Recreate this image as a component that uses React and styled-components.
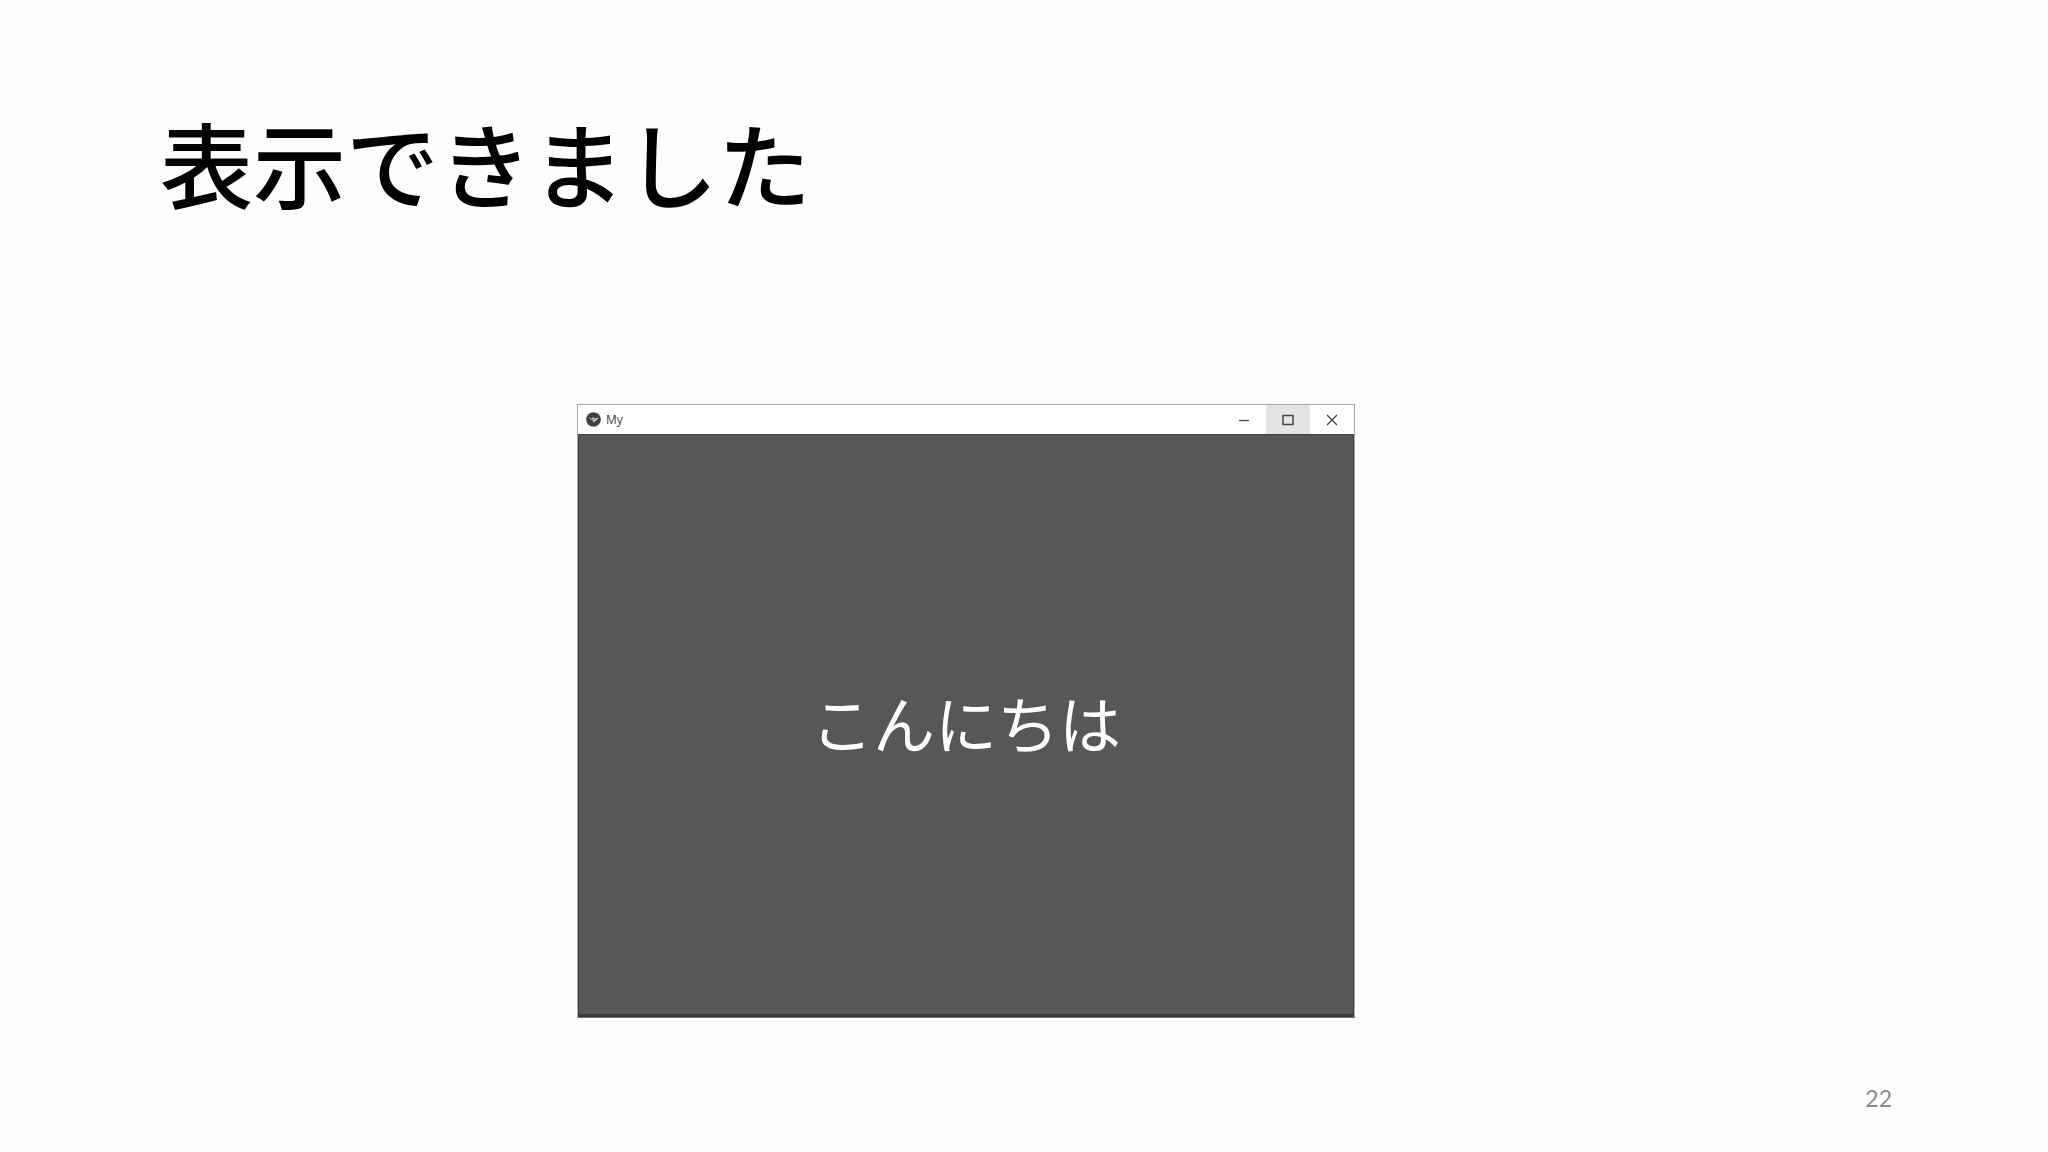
import React from "react";
import styled, { createGlobalStyle } from "styled-components";

const GlobalStyle = createGlobalStyle`
  * { box-sizing: border-box; }
  body {
    margin: 0;
    background: #fefefe;
    font-family: "Noto Sans CJK JP", sans-serif;
  }
`;

const Slide = styled.main`
  display: flex;
  flex-direction: column;
  min-height: 100vh;
  padding: 92px 156px 38px 160px;
`;

const Title = styled.h1`
  margin: 0 0 172px;
  color: #000;
  font-size: 93px;
  font-weight: 500;
  line-height: 140px;
`;

const Stage = styled.div`
  display: grid;
  grid-template-columns: 417fr minmax(0, 778px) 537fr;
`;

const AppWindow = styled.section`
  grid-column: 2;
  border: 1px solid #a8a8a8;
  border-bottom-color: #707070;
`;

const TitleBar = styled.header`
  display: flex;
  align-items: stretch;
  height: 29px;
  background: #fff;
`;

const AppName = styled.div`
  display: flex;
  flex: 1;
  align-items: center;
  gap: 5px;
  padding-left: 8px;
  color: #444;
  font-family: "Open Sans", "Noto Sans", sans-serif;
  font-size: 12px;
  line-height: 16px;
`;

const WindowButton = styled.button`
  display: grid;
  place-items: center;
  width: 44px;
  padding: 0;
  border: 0;
  background: ${({ $active }) => ($active ? "#e5e5e5" : "transparent")};
`;

const Content = styled.div`
  display: grid;
  place-items: center;
  height: 583px;
  padding-bottom: 6px;
  border: 1px solid #404040;
  border-bottom: 3px solid #3a3a3a;
  background: #575757;
`;

const Greeting = styled.p`
  margin: 0;
  color: #fff;
  font-size: 62px;
  font-weight: 400;
  line-height: 92px;
`;

const Footer = styled.footer`
  margin-top: auto;
  color: #8a8a8a;
  font-family: Lato, sans-serif;
  font-size: 23px;
  line-height: 32px;
  text-align: right;
`;

const Logo = () => (
  <svg width="15" height="15" viewBox="0 0 15 15" aria-hidden="true">
    <circle cx="7.5" cy="7.5" r="7.3" fill="#404040" />
    <path d="M2 4.8 5.5 6.4 7.3 5.4 9.3 6.4 13 5.4 10.5 8 7.8 10.4 6.3 8.6Z" fill="#d8d8d8" />
    <path d="m5 6.3 2.2 2 1.9-1.5" fill="none" stroke="#606060" strokeWidth="1" />
  </svg>
);

const Glyph = ({ children }) => (
  <svg width="12" height="12" viewBox="0 0 12 12" fill="none" stroke="#444" strokeWidth="1.3" aria-hidden="true">
    {children}
  </svg>
);

export default function App() {
  return (
    <>
      <GlobalStyle />
      <Slide lang="ja">
        <Title>表示できました</Title>
        <Stage>
          <AppWindow aria-label="My">
            <TitleBar>
              <AppName><Logo />My</AppName>
              <WindowButton type="button" aria-label="最小化">
                <Glyph><path d="M1 6.5h10" /></Glyph>
              </WindowButton>
              <WindowButton type="button" aria-label="最大化" $active>
                <Glyph><rect x="1" y="1.5" width="10" height="9" strokeWidth="1.5" /></Glyph>
              </WindowButton>
              <WindowButton type="button" aria-label="閉じる">
                <Glyph><path d="m1 1 10 10M11 1 1 11" /></Glyph>
              </WindowButton>
            </TitleBar>
            <Content>
              <Greeting>こんにちは</Greeting>
            </Content>
          </AppWindow>
        </Stage>
        <Footer>22</Footer>
      </Slide>
    </>
  );
}
